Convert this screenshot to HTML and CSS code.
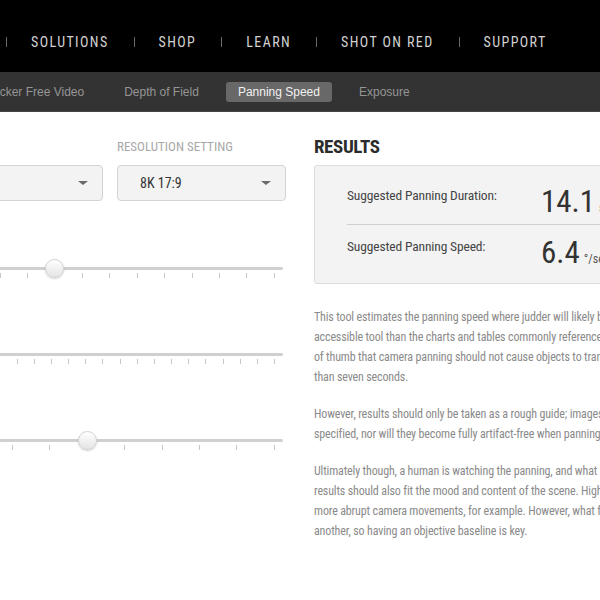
FILE: index.html
```html
<!DOCTYPE html>
<html lang="en">
<head>
<meta charset="utf-8">
<title>Panning Speed</title>
<link rel="stylesheet" href="styles.css">
</head>
<body>
<header class="topbar">
  <ul class="mainnav">
    <li class="mainnav-item">SOLUTIONS</li>
    <li class="mainnav-item">SHOP</li>
    <li class="mainnav-item">LEARN</li>
    <li class="mainnav-item">SHOT ON RED</li>
    <li class="mainnav-item">SUPPORT</li>
  </ul>
</header>
<nav class="subbar">
  <ul class="subnav">
    <li class="subnav-item">Flicker Free Video</li>
    <li class="subnav-item">Depth of Field</li>
    <li class="subnav-item is-active">Panning Speed</li>
    <li class="subnav-item">Exposure</li>
  </ul>
</nav>
<main class="tool">
  <section class="inputs">
    <div class="select-row">
      <div class="field">
        <div class="field-label">CAMERA</div>
        <div class="select"><span class="select-value">RED</span><span class="caret"></span></div>
      </div>
      <div class="field">
        <div class="field-label">RESOLUTION SETTING</div>
        <div class="select"><span class="select-value">8K 17:9</span><span class="caret"></span></div>
      </div>
    </div>
    <div class="slider slider-first">
      <div class="track"><span class="thumb thumb-a"></span></div>
      <div class="ticks ticks-a">
        <i></i><i></i><i></i><i></i><i></i><i></i><i></i><i></i><i></i><i></i><i></i><i></i><i></i>
      </div>
    </div>
    <div class="slider">
      <div class="track"><span class="thumb thumb-b"></span></div>
      <div class="ticks ticks-b">
        <i></i><i></i><i></i><i></i><i></i><i></i><i></i><i></i><i></i><i></i><i></i><i></i><i></i><i></i><i></i><i></i><i></i><i></i><i></i><i></i>
      </div>
    </div>
    <div class="slider">
      <div class="track"><span class="thumb thumb-c"></span></div>
      <div class="ticks ticks-c">
        <i></i><i></i><i></i><i></i><i></i><i></i><i></i><i></i><i></i>
      </div>
    </div>
  </section>
  <section class="results">
    <h2 class="results-title">RESULTS</h2>
    <div class="results-box">
      <div class="result-row">
        <div class="result-label">Suggested Panning Duration:</div>
        <div class="result-value">14.1<span class="unit">sec</span></div>
      </div>
      <div class="result-row">
        <div class="result-label">Suggested Panning Speed:</div>
        <div class="result-value">6.4<span class="unit">°/sec</span></div>
      </div>
    </div>
    <p class="copy">This tool estimates the panning speed where judder will likely become apparent. It is meant to be a more<br>accessible tool than the charts and tables commonly referenced in cinematography texts, and uses the rule<br>of thumb that camera panning should not cause objects to transverse the frame in less<br>than seven seconds.</p>
    <p class="copy">However, results should only be taken as a rough guide; images won't instantly judder above the speed<br>specified, nor will they become fully artifact-free when panning slower.</p>
    <p class="copy">Ultimately though, a human is watching the panning, and what matters most is how it feels. The<br>results should also fit the mood and content of the scene. High-action scenes can tolerate<br>more abrupt camera movements, for example. However, what feels right differs from one viewer to<br>another, so having an objective baseline is key.</p>
  </section>
</main>
</body>
</html>
```
FILE: styles.css
```css
* { box-sizing: border-box; }
html, body { margin: 0; padding: 0; }
body {
  background: #fff;
  overflow: hidden;
  width: 600px;
  height: 600px;
  font-family: "Liberation Sans Narrow", "Roboto Condensed", "Liberation Sans", sans-serif;
}
ul { list-style: none; margin: 0; padding: 0; }

.topbar {
  background: #000;
  height: 72px;
  padding-top: 32px;
}
.mainnav {
  display: flex;
  padding-left: 6px;
}
.mainnav-item {
  display: flex;
  align-items: center;
  height: 20px;
  font-size: 14px;
  letter-spacing: 1.4px;
  color: #d2d2d2;
  padding-right: 25px;
  white-space: nowrap;
}
.mainnav-item::before {
  content: "";
  width: 1px;
  height: 10px;
  background: #6a6a6a;
  margin-right: 24px;
}

.subbar {
  background: #333;
  height: 40px;
  padding-top: 1px;
  border-bottom: 1px solid #474747;
  display: flex;
  align-items: center;
}
.subnav {
  display: flex;
  gap: 14px;
  margin-left: -26px;
  font-family: "Liberation Sans", Arial, sans-serif;
  font-size: 12px;
}
.subnav-item {
  color: #959595;
  padding: 0 13px;
  height: 20px;
  line-height: 20px;
  border-radius: 3px;
  white-space: nowrap;
}
.subnav-item.is-active {
  background: #686868;
  color: #f2f2f2;
  padding: 0 12px;
}

.tool {
  display: flex;
  gap: 28px;
  margin-left: -66px;
  padding-top: 24px;
}
.inputs {
  width: 352px;
  flex: none;
  padding-top: 3px;
}
.select-row {
  display: grid;
  grid-template-columns: 169px 169px;
  gap: 14px;
}
.field-label {
  font-size: 13px;
  line-height: 16px;
  color: #a8a8a8;
  margin-bottom: 10px;
}
.select {
  height: 36px;
  border: 1px solid #d3d3d3;
  border-radius: 4px;
  background: #f3f3f3;
  display: flex;
  align-items: center;
  justify-content: space-between;
  padding: 0 14px 0 22px;
}
.select-value {
  font-size: 14px;
  color: #333;
}
.caret {
  width: 0;
  height: 0;
  border-left: 5px solid transparent;
  border-right: 5px solid transparent;
  border-top: 4px solid #6a6a6a;
}

.slider {
  height: 86px;
  width: 349px;
}
.slider-first { margin-top: 66px; }
.slider-first + .slider { height: 85.5px; }
.track {
  position: relative;
  height: 3px;
  border-radius: 2px;
  background: #d0d0d0;
}
.thumb {
  position: absolute;
  top: 50%;
  width: 19px;
  height: 19px;
  margin: -9.5px 0 0 -9.5px;
  border-radius: 50%;
  border: 1px solid #d4d4d4;
  background: linear-gradient(#ffffff, #e4e4e4);
  box-shadow: 0 1px 2px rgba(0,0,0,0.18);
}
.thumb-a { left: 120.5px; }
.thumb-b { left: 8px; }
.thumb-c { left: 153.5px; }
.ticks {
  display: flex;
  justify-content: space-between;
  height: 5px;
  margin-top: 3px;
  margin-right: 8px;
}
.ticks i {
  width: 1px;
  height: 5px;
  background: #c6c6c6;
}
.ticks-a { margin-left: 11px; }
.ticks-b { margin-left: 14px; }
.ticks-c { margin-left: 40.3px; }

.results {
  width: 560px;
  flex: none;
}
.results-title {
  margin: 0 0 8px;
  padding-top: 1px;
  font-size: 19px;
  line-height: 20px;
  font-weight: bold;
  color: #2b2b2b;
  letter-spacing: -0.4px;
}
.results-box {
  background: #f3f3f3;
  border: 1px solid #dcdcdc;
  border-radius: 3px;
  padding: 19px 0 14px 32px;
}
.result-row {
  display: flex;
  align-items: flex-start;
}
.result-row:first-child {
  padding-bottom: 6px;
  border-bottom: 1px solid #cfcfcf;
}
.result-row + .result-row {
  padding-top: 11px;
}
.result-label {
  width: 194px;
  font-size: 13.5px;
  letter-spacing: -0.15px;
  line-height: 20px;
  color: #444;
}
.result-value {
  margin-top: 1px;
  font-size: 31px;
  line-height: 32px;
  height: 32px;
  color: #333;
}
.unit {
  font-size: 12px;
  line-height: 1;
  margin-left: 4px;
  color: #555;
}
.copy {
  margin: 0 0 17px;
  font-size: 12px;
  letter-spacing: -0.15px;
  line-height: 20px;
  color: #8a8a8a;
  white-space: nowrap;
}
.results-box + .copy { margin-top: 23px; }
```
